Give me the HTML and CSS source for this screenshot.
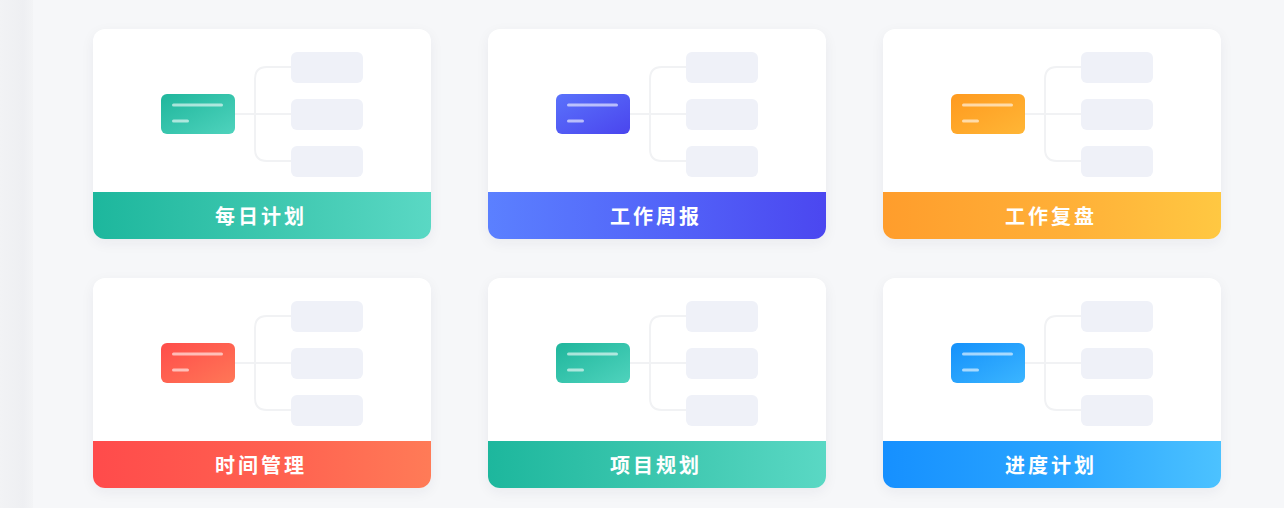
FILE: index.html
```html
<!DOCTYPE html>
<html lang="zh">
<head>
<meta charset="utf-8">
<title>模板</title>
<link rel="stylesheet" href="styles.css">
</head>
<body>
<div class="layout">
  <aside class="side"></aside>
  <main class="main">
    <div class="grid">
      <div class="card">
        <div class="preview">
          <svg class="map" viewBox="0 0 338 163" width="338" height="163">
            <defs><linearGradient id="g1" x1="0" y1="0" x2="1" y2="1"><stop offset="0" stop-color="#1fb69c"/><stop offset="1" stop-color="#4fd3bd"/></linearGradient></defs>
            <path class="wire" d="M141 85 H162 M198 38 H174 Q162 38 162 50 V120 Q162 132 174 132 H198 M162 85 H198"/>
            <rect class="child" x="198" y="23" width="72" height="31" rx="6"/>
            <rect class="child" x="198" y="70" width="72" height="31" rx="6"/>
            <rect class="child" x="198" y="117" width="72" height="31" rx="6"/>
            <rect x="68" y="65" width="74" height="40" rx="6" fill="url(#g1)"/>
            <rect class="bar" x="79" y="74.5" width="51" height="3" rx="1.5"/>
            <rect class="bar" x="79" y="90.5" width="17" height="3" rx="1.5"/>
          </svg>
        </div>
        <div class="band teal">每日计划</div>
      </div>
      <div class="card">
        <div class="preview">
          <svg class="map" viewBox="0 0 338 163" width="338" height="163">
            <defs><linearGradient id="g2" x1="0" y1="0" x2="1" y2="1"><stop offset="0" stop-color="#5a72fb"/><stop offset="1" stop-color="#4a45ee"/></linearGradient></defs>
            <path class="wire" d="M141 85 H162 M198 38 H174 Q162 38 162 50 V120 Q162 132 174 132 H198 M162 85 H198"/>
            <rect class="child" x="198" y="23" width="72" height="31" rx="6"/>
            <rect class="child" x="198" y="70" width="72" height="31" rx="6"/>
            <rect class="child" x="198" y="117" width="72" height="31" rx="6"/>
            <rect x="68" y="65" width="74" height="40" rx="6" fill="url(#g2)"/>
            <rect class="bar" x="79" y="74.5" width="51" height="3" rx="1.5"/>
            <rect class="bar" x="79" y="90.5" width="17" height="3" rx="1.5"/>
          </svg>
        </div>
        <div class="band blue">工作周报</div>
      </div>
      <div class="card">
        <div class="preview">
          <svg class="map" viewBox="0 0 338 163" width="338" height="163">
            <defs><linearGradient id="g3" x1="0" y1="0" x2="1" y2="1"><stop offset="0" stop-color="#ff9a1f"/><stop offset="1" stop-color="#ffb636"/></linearGradient></defs>
            <path class="wire" d="M141 85 H162 M198 38 H174 Q162 38 162 50 V120 Q162 132 174 132 H198 M162 85 H198"/>
            <rect class="child" x="198" y="23" width="72" height="31" rx="6"/>
            <rect class="child" x="198" y="70" width="72" height="31" rx="6"/>
            <rect class="child" x="198" y="117" width="72" height="31" rx="6"/>
            <rect x="68" y="65" width="74" height="40" rx="6" fill="url(#g3)"/>
            <rect class="bar" x="79" y="74.5" width="51" height="3" rx="1.5"/>
            <rect class="bar" x="79" y="90.5" width="17" height="3" rx="1.5"/>
          </svg>
        </div>
        <div class="band orange">工作复盘</div>
      </div>
      <div class="card">
        <div class="preview">
          <svg class="map" viewBox="0 0 338 163" width="338" height="163">
            <defs><linearGradient id="g4" x1="0" y1="0" x2="1" y2="1"><stop offset="0" stop-color="#ff4d4a"/><stop offset="1" stop-color="#ff7757"/></linearGradient></defs>
            <path class="wire" d="M141 85 H162 M198 38 H174 Q162 38 162 50 V120 Q162 132 174 132 H198 M162 85 H198"/>
            <rect class="child" x="198" y="23" width="72" height="31" rx="6"/>
            <rect class="child" x="198" y="70" width="72" height="31" rx="6"/>
            <rect class="child" x="198" y="117" width="72" height="31" rx="6"/>
            <rect x="68" y="65" width="74" height="40" rx="6" fill="url(#g4)"/>
            <rect class="bar" x="79" y="74.5" width="51" height="3" rx="1.5"/>
            <rect class="bar" x="79" y="90.5" width="17" height="3" rx="1.5"/>
          </svg>
        </div>
        <div class="band red">时间管理</div>
      </div>
      <div class="card">
        <div class="preview">
          <svg class="map" viewBox="0 0 338 163" width="338" height="163">
            <defs><linearGradient id="g5" x1="0" y1="0" x2="1" y2="1"><stop offset="0" stop-color="#1fb69c"/><stop offset="1" stop-color="#4fd3bd"/></linearGradient></defs>
            <path class="wire" d="M141 85 H162 M198 38 H174 Q162 38 162 50 V120 Q162 132 174 132 H198 M162 85 H198"/>
            <rect class="child" x="198" y="23" width="72" height="31" rx="6"/>
            <rect class="child" x="198" y="70" width="72" height="31" rx="6"/>
            <rect class="child" x="198" y="117" width="72" height="31" rx="6"/>
            <rect x="68" y="65" width="74" height="40" rx="6" fill="url(#g5)"/>
            <rect class="bar" x="79" y="74.5" width="51" height="3" rx="1.5"/>
            <rect class="bar" x="79" y="90.5" width="17" height="3" rx="1.5"/>
          </svg>
        </div>
        <div class="band teal">项目规划</div>
      </div>
      <div class="card">
        <div class="preview">
          <svg class="map" viewBox="0 0 338 163" width="338" height="163">
            <defs><linearGradient id="g6" x1="0" y1="0" x2="1" y2="1"><stop offset="0" stop-color="#1591fb"/><stop offset="1" stop-color="#3bb5ff"/></linearGradient></defs>
            <path class="wire" d="M141 85 H162 M198 38 H174 Q162 38 162 50 V120 Q162 132 174 132 H198 M162 85 H198"/>
            <rect class="child" x="198" y="23" width="72" height="31" rx="6"/>
            <rect class="child" x="198" y="70" width="72" height="31" rx="6"/>
            <rect class="child" x="198" y="117" width="72" height="31" rx="6"/>
            <rect x="68" y="65" width="74" height="40" rx="6" fill="url(#g6)"/>
            <rect class="bar" x="79" y="74.5" width="51" height="3" rx="1.5"/>
            <rect class="bar" x="79" y="90.5" width="17" height="3" rx="1.5"/>
          </svg>
        </div>
        <div class="band sky">进度计划</div>
      </div>
    </div>
  </main>
</div>
</body>
</html>
```

FILE: styles.css
```css
* { box-sizing: border-box; }
html, body { margin: 0; padding: 0; }
body {
  background: #f5f6f8;
  font-family: "Noto Sans CJK SC", "Noto Sans", sans-serif;
  height: 508px;
  overflow: hidden;
}
.layout {
  display: flex;
  height: 508px;
}
.side {
  width: 33px;
  flex: 0 0 33px;
  background: linear-gradient(90deg, #f2f3f5 0%, #eeeff2 70%, #f3f4f6 100%);
}
.main {
  flex: 1;
  background: #f6f7f9;
  padding: 29px 0 0 60px;
}
.grid {
  display: grid;
  grid-template-columns: repeat(3, 338px);
  column-gap: 57px;
  row-gap: 39px;
}
.card {
  width: 338px;
  height: 210px;
  border-radius: 12px;
  overflow: hidden;
  background: #ffffff;
  box-shadow: 0 4px 14px rgba(30, 40, 70, 0.06);
  display: flex;
  flex-direction: column;
}
.preview {
  height: 163px;
  flex: 0 0 163px;
}
.map { display: block; }
.wire {
  fill: none;
  stroke: #f1f2f4;
  stroke-width: 2;
}
.child { fill: #eff1f8; }
.bar { fill: rgba(255, 255, 255, 0.6); }
.band {
  flex: 1;
  display: flex;
  align-items: center;
  justify-content: center;
  color: #ffffff;
  font-size: 20px;
  font-weight: 700;
  letter-spacing: 3px;
  padding-right: 2px;
}
.teal { background: linear-gradient(90deg, #1db79d 0%, #3fc8b0 55%, #5ad8c4 100%); }
.blue { background: linear-gradient(90deg, #5b80ff 0%, #5262f8 55%, #4b47f0 100%); }
.orange { background: linear-gradient(90deg, #ff9d2c 0%, #ffb038 55%, #ffc842 100%); }
.red { background: linear-gradient(90deg, #ff4b4b 0%, #ff6150 55%, #ff7b57 100%); }
.sky { background: linear-gradient(90deg, #1690ff 0%, #2ba6ff 55%, #4cc2ff 100%); }
```
